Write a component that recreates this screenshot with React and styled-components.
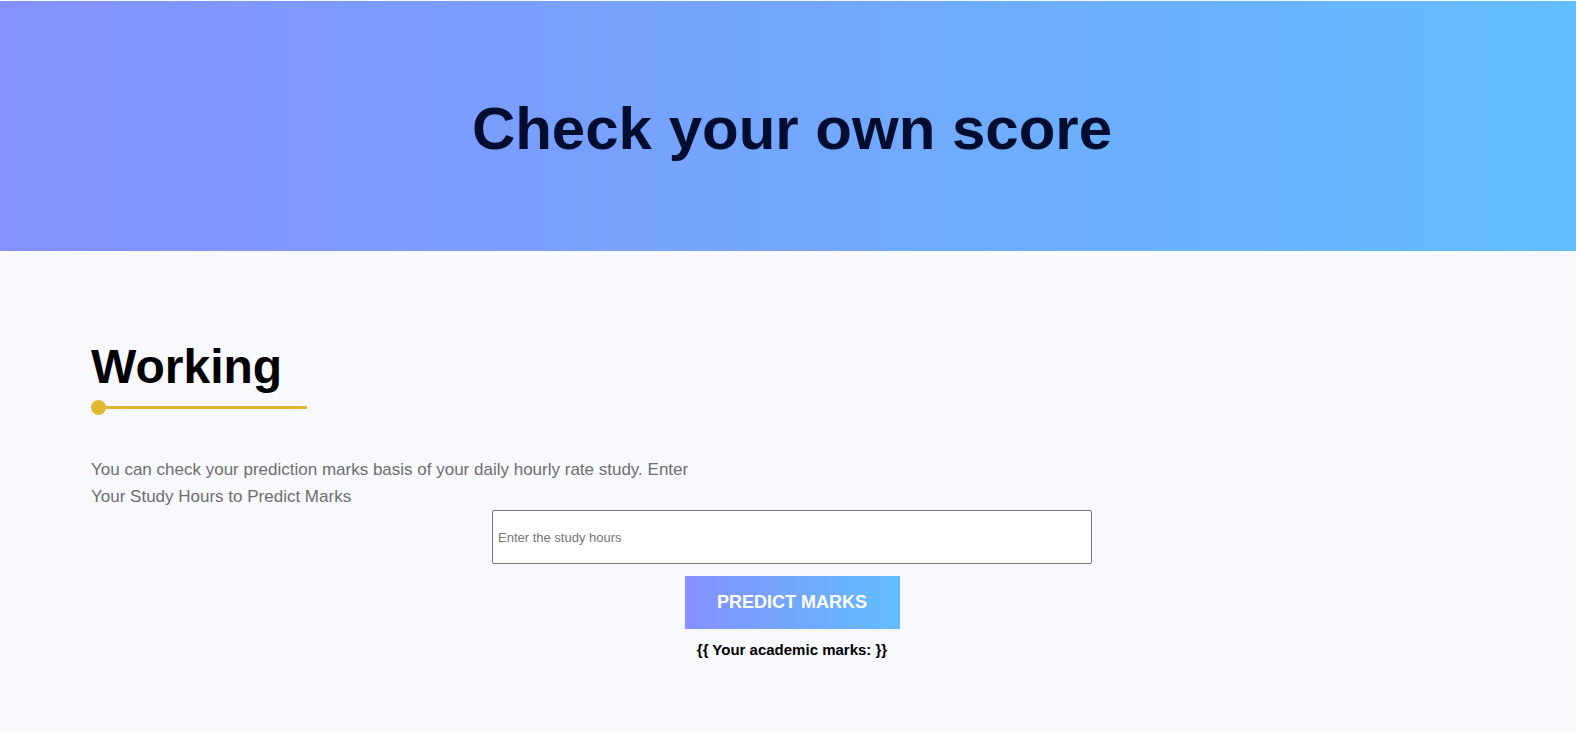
import React from 'react'
import styled, { createGlobalStyle } from 'styled-components'

const GlobalStyle = createGlobalStyle`
    html, body {
        overflow-x: hidden;
    }
    body {
        margin: 0;
        background-color: #f8f8ff;
        font-family: "Liberation Sans", Arial, sans-serif;
    }
`

function App() {
    return (
        <Page>
            <GlobalStyle />
            <Header>
                <Title>Check your own score</Title>
            </Header>
            <Section>
                <Heading>Working</Heading>
                <Underline />
                <Text>
                    You can check your prediction marks basis of your daily hourly rate study. Enter
                    Your Study Hours to Predict Marks
                </Text>
                <Form>
                    <Input type="text" placeholder="Enter the study hours" />
                    <Button type="button">Predict Marks</Button>
                    <Result>{'{{ Your academic marks: }}'}</Result>
                </Form>
            </Section>
        </Page>
    )
}

export default App

const Page = styled.div`
    width: calc(100% + 8px);
`

const Header = styled.header`
    margin-top: 1px;
    height: 250px;
    display: flex;
    align-items: center;
    justify-content: center;
    background: linear-gradient(to right, #8490ff, #62bdfc);
`

const Title = styled.h1`
    margin: 4px 0 0;
    font-size: 60px;
    font-weight: bold;
    color: #000d2f;
`

const Section = styled.section`
    padding: 88px 91px 40px;
`

const Heading = styled.h2`
    margin: 0;
    font-size: 48px;
    line-height: 56px;
    font-weight: bold;
    color: #000;
`

const Underline = styled.div`
    position: relative;
    margin-top: 11px;
    margin-left: 7px;
    width: 209px;
    height: 3px;
    background-color: #e1b730;
    &::before {
        content: '';
        position: absolute;
        left: -7px;
        top: -6px;
        width: 15px;
        height: 15px;
        border-radius: 50%;
        background-color: #e1b730;
    }
`

const Text = styled.p`
    margin: 47px 0 0;
    max-width: 610px;
    font-size: 17px;
    line-height: 27px;
    color: #6e6e6e;
`

const Form = styled.div`
    display: flex;
    flex-direction: column;
    align-items: center;
    margin-top: 0;
`

const Input = styled.input`
    box-sizing: border-box;
    width: 600px;
    height: 54px;
    padding: 0 5px;
    border: 1px solid #767676;
    border-radius: 2px;
    background: #fff;
    font-family: "Liberation Sans", Arial, sans-serif;
    font-size: 13px;
    &::placeholder {
        color: #757575;
    }
`

const Button = styled.button`
    margin-top: 12px;
    width: 215px;
    height: 53px;
    border: none;
    background: linear-gradient(to right, #8490ff, #62bdfc);
    color: #fff;
    font-family: "Liberation Sans", Arial, sans-serif;
    font-size: 18px;
    font-weight: bold;
    text-transform: uppercase;
`

const Result = styled.p`
    margin: 12px 0 0;
    font-size: 15px;
    font-weight: bold;
    color: #000;
`
